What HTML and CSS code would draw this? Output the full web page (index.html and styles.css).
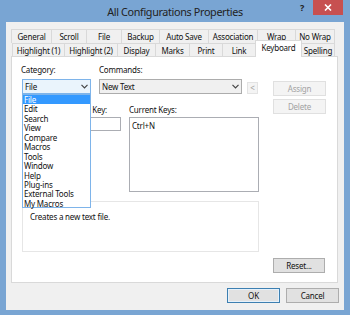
FILE: index.html
```html
<!DOCTYPE html>
<html>
<head>
<meta charset="utf-8">
<link rel="stylesheet" href="styles.css">
</head>
<body>
<div class="window">
  <div class="titlebar">
    <div></div>
    <div class="title">All Configurations Properties</div>
    <div class="controls">
      <span class="help">?</span>
      <span class="close"><svg width="8" height="7" viewBox="0 0 8 7"><path d="M1 0.5 L7 6.5 M7 0.5 L1 6.5" stroke="#fff" stroke-width="1.6"/></svg></span>
    </div>
  </div>
  <div class="content">
    <div class="tabs">
      <div class="tabrow back">
        <div class="tab">General</div>
        <div class="tab">Scroll</div>
        <div class="tab">File</div>
        <div class="tab">Backup</div>
        <div class="tab">Auto Save</div>
        <div class="tab">Association</div>
        <div class="tab">Wrap</div>
        <div class="tab">No Wrap</div>
      </div>
      <div class="tabrow front">
        <div class="tab">Highlight (1)</div>
        <div class="tab">Highlight (2)</div>
        <div class="tab">Display</div>
        <div class="tab">Marks</div>
        <div class="tab">Print</div>
        <div class="tab">Link</div>
        <div class="tab selected">Keyboard</div>
        <div class="tab">Spelling</div>
      </div>
    </div>
    <div class="panel">
      <div class="main">
        <div class="labels">
          <span class="lbl-cat">Category:</span>
          <span>Commands:</span>
        </div>
        <div class="combos">
          <div class="combo-wrap">
            <div class="combo focus"><span>File</span><svg class="arrow" width="7" height="5" viewBox="0 0 7 5"><path d="M0.5 0.8 L3.5 3.8 L6.5 0.8" fill="none" stroke="#444" stroke-width="1.2"/></svg></div>
            <div class="droplist">
              <div class="item sel">File</div>
              <div class="item">Edit</div>
              <div class="item">Search</div>
              <div class="item">View</div>
              <div class="item">Compare</div>
              <div class="item">Macros</div>
              <div class="item">Tools</div>
              <div class="item">Window</div>
              <div class="item">Help</div>
              <div class="item">Plug-ins</div>
              <div class="item">External Tools</div>
              <div class="item">My Macros</div>
            </div>
          </div>
          <div class="combo commands"><span>New Text</span><svg class="arrow" width="7" height="5" viewBox="0 0 7 5"><path d="M0.5 0.8 L3.5 3.8 L6.5 0.8" fill="none" stroke="#444" stroke-width="1.2"/></svg></div>
          <div class="smallbtn">&lt;</div>
        </div>
        <div class="labels2">
          <span class="lbl-key">Press New Key:</span>
          <span>Current Keys:</span>
        </div>
        <div class="boxes">
          <div class="keybox"></div>
          <div class="curkeys">Ctrl+N</div>
        </div>
        <div class="desc">Creates a new text file.</div>
      </div>
      <div class="side">
        <div class="btn disabled">Assign</div>
        <div class="btn disabled">Delete</div>
        <div class="btn reset">Reset...</div>
      </div>
    </div>
    <div class="footer">
      <div class="btn default">OK</div>
      <div class="btn">Cancel</div>
    </div>
  </div>
</div>
</body>
</html>
```
FILE: styles.css
```css
* { box-sizing: border-box; }
html, body { margin: 0; padding: 0; }
body {
  width: 350px;
  height: 315px;
  overflow: hidden;
  background: #79a5d3;
  font-family: "Noto Sans", "Open Sans", sans-serif;
  font-size: 8px;
  letter-spacing: -0.2px;
  color: #111;
}
.window {
  display: flex;
  flex-direction: column;
  height: 315px;
}
.titlebar {
  height: 22px;
  display: grid;
  grid-template-columns: 1fr auto 1fr;
  align-items: start;
}
.title {
  font-size: 10.8px;
  letter-spacing: -0.35px;
  color: #222;
  line-height: 22px;
  padding-top: 1px;
}
.controls {
  display: flex;
  justify-content: flex-end;
  align-items: flex-start;
  padding-right: 7px;
}
.help {
  font-size: 9px;
  font-weight: bold;
  color: #222;
  line-height: 15px;
  margin-right: 9px;
}
.close {
  width: 30px;
  height: 15px;
  background: #c75050;
  display: flex;
  align-items: center;
  justify-content: center;
}
.content {
  flex: 1;
  margin: 0 6px 5px 6px;
  background: #f0f0f0;
  padding: 7px 5px 0 5px;
  display: flex;
  flex-direction: column;
}
.tabs {
  height: 27px;
  display: flex;
  flex-direction: column;
}
.tabrow {
  display: flex;
}
.tabrow.back {
  height: 14px;
}
.tabrow.front {
  height: 13px;
  margin-left: 1px;
  align-items: flex-end;
  position: relative;
  z-index: 2;
}
.tab {
  height: 100%;
  border-top: 1px solid #d9d9d9;
  border-right: 1px solid #d9d9d9;
  background: #f0f0f0;
  text-align: center;
  line-height: 13px;
  white-space: nowrap;
}
.tab:first-child { border-left: 1px solid #d9d9d9; }
.back .tab:nth-child(1) { width: 41px; }
.back .tab:nth-child(2) { width: 35px; }
.back .tab:nth-child(3) { width: 35px; }
.back .tab:nth-child(4) { width: 38px; }
.back .tab:nth-child(5) { width: 49px; }
.back .tab:nth-child(6) { width: 49px; }
.back .tab:nth-child(7) { width: 38px; }
.back .tab:nth-child(8) { width: 39px; }
.front .tab:nth-child(1) { width: 53px; }
.front .tab:nth-child(2) { width: 53px; }
.front .tab:nth-child(3) { width: 38px; }
.front .tab:nth-child(4) { width: 34px; }
.front .tab:nth-child(5) { width: 33px; }
.front .tab:nth-child(6) { width: 33px; }
.front .tab:nth-child(7) { width: 46px; }
.front .tab:nth-child(8) { width: 33px; }
.tab.selected {
  height: 17px;
  margin-bottom: -1px;
  margin-left: -1px;
  width: 47px !important;
  border-left: 1px solid #d9d9d9;
  background: #fff;
  line-height: 14px;
}
.panel {
  width: 327px;
  height: 227px;
  background: #fff;
  border: 1px solid #d9d9d9;
  display: flex;
  padding: 7px 0 9px 9px;
  position: relative;
  z-index: 1;
}
.main {
  width: 238px;
  display: flex;
  flex-direction: column;
}
.labels, .labels2 {
  height: 12px;
  line-height: 12px;
  display: flex;
  white-space: nowrap;
}
.lbl-cat { width: 78px; }
.combos {
  margin-top: 3px;
  display: flex;
  align-items: flex-end;
}
.combo-wrap {
  position: relative;
  margin-left: 1px;
  margin-right: 8px;
}
.combo {
  height: 15px;
  border: 1px solid #acacac;
  background: #f0f0f0;
  display: flex;
  align-items: center;
  justify-content: space-between;
  padding: 0 2px 0 2px;
}
.combo.focus {
  width: 69px;
  border-color: #7eb4ea;
  background: #eaf4fc;
}
.combo.commands { width: 143px; }
.arrow { flex: none; }
.droplist {
  position: absolute;
  top: 15px;
  left: 0;
  width: 69px;
  height: 114px;
  background: #fff;
  border: 1px solid #7eb4ea;
  z-index: 5;
  padding-top: 0;
}
.item {
  height: 9.45px;
  line-height: 9.45px;
  padding-left: 1px;
  white-space: nowrap;
}
.item.sel {
  background: #3399ff;
  color: #fff;
}
.smallbtn {
  margin-left: 5px;
  width: 11px;
  height: 12px;
  border: 1px solid #e3e3e3;
  background: #f4f4f4;
  color: #a0a0a0;
  text-align: center;
  line-height: 10px;
}
.labels2 {
  margin-top: 10px;
}
.lbl-key {
  width: 108px;
  text-align: right;
  padding-right: 22px;
}
.boxes {
  margin-top: 1px;
  display: flex;
  align-items: flex-start;
}
.keybox {
  margin-left: 1px;
  width: 99px;
  height: 14px;
  border: 1px solid #abadb3;
  margin-right: 8px;
}
.curkeys {
  width: 130px;
  height: 75px;
  border: 1px solid #abadb3;
  padding: 2px 0 0 2px;
  line-height: 11px;
}
.desc {
  margin-top: 9px;
  margin-left: 1px;
  width: 237px;
  height: 51px;
  border: 1px solid #e6e6e6;
  padding: 9px 0 0 7px;
  line-height: 11px;
}
.side {
  margin-left: 14px;
  width: 53px;
  display: flex;
  flex-direction: column;
}
.btn {
  height: 15px;
  border: 1px solid #adadad;
  background: #e1e1e1;
  text-align: center;
  line-height: 13px;
  width: 53px;
}
.side .btn:first-child { margin-top: 17px; }
.side .btn + .btn { margin-top: 3px; }
.btn.disabled {
  background: #f4f4f4;
  border-color: #e0e0e0;
  color: #a3a3a3;
}
.side .btn.reset {
  margin-top: auto;
  width: 52px;
}
.footer {
  margin-top: 5px;
  display: flex;
  justify-content: flex-end;
  gap: 6px;
}
.footer .btn { width: 53px; }
.btn.default {
  border-color: #3c7fb1;
  box-shadow: inset 0 0 0 1px #e5f1fb;
}
```
